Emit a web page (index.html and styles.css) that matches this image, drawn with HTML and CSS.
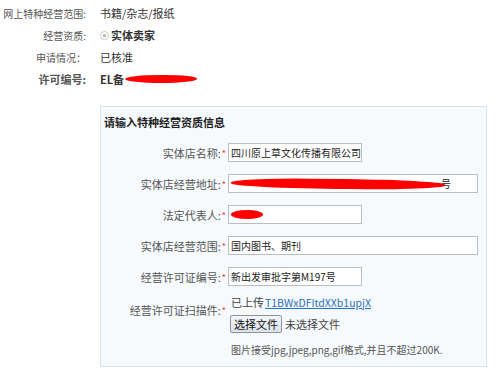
FILE: index.html
```html
<!DOCTYPE html>
<html lang="zh-CN">
<head>
  <meta charset="UTF-8">
  <title>特种经营资质</title>
  <link rel="stylesheet" href="styles.css">
</head>
<body>
  <div class="summary">
    <div class="sum-row">
      <div class="sum-label">网上特种经营范围:</div>
      <div class="sum-value">书籍/杂志/报纸</div>
    </div>
    <div class="sum-row">
      <div class="sum-label">经营资质:</div>
      <div class="sum-value"><span class="radio"></span><b>实体卖家</b></div>
    </div>
    <div class="sum-row">
      <div class="sum-label">申请情况：</div>
      <div class="sum-value">已核准</div>
    </div>
    <div class="sum-row strong">
      <div class="sum-label">许可编号:</div>
      <div class="sum-value">EL备<span class="blot blot-code"></span></div>
    </div>
  </div>

  <div class="panel">
    <div class="panel-title">请输入特种经营资质信息</div>

    <div class="form-row">
      <div class="form-label">实体店名称:<span class="star">*</span></div>
      <div class="field field-short">四川原上草文化传播有限公司</div>
    </div>
    <div class="form-row">
      <div class="form-label">实体店经营地址:<span class="star">*</span></div>
      <div class="field field-long"><span class="blot blot-addr"></span><span class="tail">号</span></div>
    </div>
    <div class="form-row">
      <div class="form-label">法定代表人:<span class="star">*</span></div>
      <div class="field field-short"><span class="blot blot-name"></span></div>
    </div>
    <div class="form-row">
      <div class="form-label">实体店经营范围:<span class="star">*</span></div>
      <div class="field field-long">国内图书、期刊</div>
    </div>
    <div class="form-row">
      <div class="form-label">经营许可证编号:<span class="star">*</span></div>
      <div class="field field-short">新出发审批字第M197号</div>
    </div>

    <div class="upload-row">
      <div class="form-label upload-label">经营许可证扫描件:<span class="star">*</span></div>
      <div class="upload">
        <div class="uploaded">已上传<a href="#">T1BWxDFItdXXb1upjX</a></div>
        <div class="file-line"><span class="file-btn">选择文件</span>未选择文件</div>
        <div class="note">图片接受jpg,jpeg,png,gif格式,并且不超过200K.</div>
      </div>
    </div>
  </div>
</body>
</html>
```

FILE: styles.css
```css
body {
    margin: 0;
    padding-top: 2px;
    font-family: "Noto Sans CJK SC", "Liberation Sans", sans-serif;
    font-size: 11px;
    color: #444;
    background: #fff;
}

.summary {
    height: 104px;
}

.sum-row {
    display: flex;
    align-items: center;
    height: 22px;
}

.sum-label {
    width: 86px;
    text-align: right;
    color: #555;
    font-size: 10px;
    white-space: nowrap;
}

.sum-value {
    margin-left: 14px;
    display: flex;
    align-items: center;
    color: #333;
}

.sum-row.strong .sum-label {
    font-size: 11px;
}

.sum-row.strong {
    font-weight: bold;
    color: #333;
}

.radio {
    width: 7px;
    height: 7px;
    border: 1px solid #ccc;
    border-radius: 50%;
    margin-right: 2px;
    background: radial-gradient(circle, #bbb 1.5px, #fff 2px);
}

.blot {
    display: inline-block;
    background: #f00;
}

.blot-code {
    width: 72px;
    height: 8px;
    border-radius: 50% 45% 50% 50%;
    margin-left: 1px;
}

.panel {
    margin-left: 100px;
    width: 385px;
    height: 259px;
    border: 1px solid #d6e4ee;
    background: #f6fafd;
}

.panel-title {
    font-weight: bold;
    color: #222;
    padding: 9px 0 0 3px;
    line-height: 13px;
    height: 27px;
}

.form-row {
    display: flex;
    align-items: center;
    height: 19px;
    margin-bottom: 12px;
}

.form-label {
    width: 125px;
    text-align: right;
    color: #555;
    white-space: nowrap;
}

.star {
    color: #e33;
    font-size: 9px;
    margin-left: 1px;
    vertical-align: 1px;
}

.field {
    margin-left: 2px;
    height: 17px;
    border: 1px solid #b9bec3;
    background: #fff;
    color: #222;
    font-size: 10px;
    line-height: 17px;
    padding-left: 2px;
    display: flex;
    align-items: center;
    white-space: nowrap;
    overflow: hidden;
}

.field-short {
    width: 130px;
}

.field-long {
    width: 246px;
}

.blot-addr {
    width: 214px;
    height: 10px;
    border-radius: 40% 50% 50% 60% / 50%;
    transform: rotate(0.6deg);
}

.tail {
    margin-left: -4px;
}

.blot-name {
    width: 32px;
    height: 9px;
    border-radius: 50%;
}

.upload-row {
    display: flex;
    margin-top: -3px;
}

.upload-label {
    padding-top: 7px;
}

.upload {
    margin-left: 4px;
    color: #444;
}

.uploaded {
    line-height: 14px;
    margin-left: 1px;
}

.uploaded a {
    color: #2a6fc0;
    margin-left: 1px;
    font-size: 10.5px;
}

.file-line {
    display: flex;
    align-items: center;
    margin-top: 5px;
}

.file-btn {
    display: inline-block;
    height: 16px;
    line-height: 16px;
    padding: 0 3px;
    border: 1px solid #8a94a0;
    border-radius: 2px;
    background: linear-gradient(#f4f6f8, #dde2e8);
    color: #111;
    margin-right: 3px;
}

.note {
    margin-top: 9px;
    margin-left: 1px;
    color: #555;
    font-size: 10px;
}
```
